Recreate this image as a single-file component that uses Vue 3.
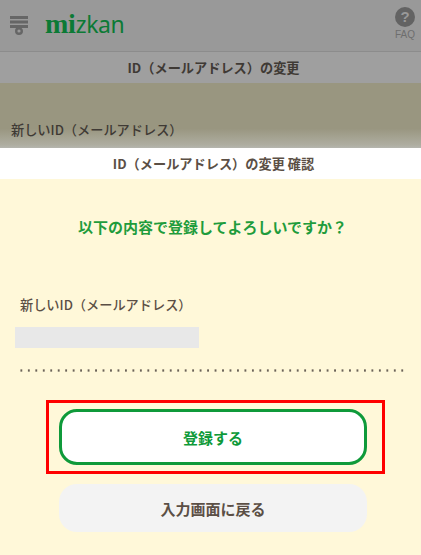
<script setup>
const title = 'ID（メールアドレス）の変更'
const label = '新しいID（メールアドレス）'
</script>

<template>
  <div class="page">
    <header class="top">
      <div class="brand">
        <svg class="menu" width="18" height="19" viewBox="0 0 18 19">
          <rect x="0" y="0" width="18" height="3" fill="#666" />
          <rect x="0" y="4.5" width="18" height="3" fill="#666" />
          <rect x="0" y="9" width="18" height="3" fill="#666" />
          <circle cx="9" cy="15" r="2.8" fill="none" stroke="#666" stroke-width="2.4" />
        </svg>
        <div class="logo"><span class="logo-a">mi</span><span class="logo-b">zkan</span></div>
      </div>
      <div class="faq">
        <div class="faq-icon">?</div>
        <div class="faq-text">FAQ</div>
      </div>
    </header>
    <div class="dim-title">{{ title }}</div>
    <div class="dim-body">{{ label }}</div>
    <div class="modal-title">{{ title }} 確認</div>
    <main class="modal">
      <h1 class="question">以下の内容で登録してよろしいですか？</h1>
      <div class="field-label">{{ label }}</div>
      <div class="field-value"></div>
      <div class="dots"></div>
      <div class="actions">
        <div class="mark">
          <button class="btn primary">登録する</button>
        </div>
        <button class="btn secondary">入力画面に戻る</button>
      </div>
    </main>
  </div>
</template>

<style>
html, body { margin: 0; padding: 0; }
</style>

<style scoped>
.page {
  width: 421px;
  height: 555px;
  overflow: hidden;
  display: flex;
  flex-direction: column;
  background: #fff8d9;
  color: #5b4f45;
  font-family: "Noto Sans CJK JP", "Noto Sans", sans-serif;
}
.top {
  height: 51px;
  flex: none;
  background: #999;
  border-bottom: 1px solid #8c8c8c;
  display: flex;
  justify-content: space-between;
  padding: 0 6px 0 10px;
}
.brand { display: flex; align-items: flex-start; }
.menu { margin-top: 16px; }
.logo {
  margin: 6px 0 0 17px;
  line-height: 36px;
  color: #0b7a35;
  white-space: nowrap;
}
.logo-a {
  font-family: "Liberation Serif", serif;
  font-weight: 700;
  font-size: 28px;
  letter-spacing: -0.2px;
}
.logo-b {
  font-family: "Noto Sans", sans-serif;
  font-size: 23px;
  letter-spacing: -0.4px;
}
.faq {
  display: flex;
  flex-direction: column;
  align-items: center;
  padding-top: 7px;
}
.faq-icon {
  width: 20px;
  height: 20px;
  border-radius: 50%;
  background: #636363;
  color: #999;
  font: 700 15px/20px "Liberation Sans", sans-serif;
  text-align: center;
}
.faq-text {
  margin-top: 2px;
  font: 10px/12px "Liberation Sans", sans-serif;
  color: #6e6e6e;
}
.dim-title {
  height: 31px;
  flex: none;
  box-sizing: border-box;
  padding-left: 6px;
  background: #9f9f9f;
  color: #3f3a35;
  font-size: 13.2px;
  font-weight: 700;
  line-height: 31px;
  text-align: center;
}
.dim-body {
  height: 65px;
  flex: none;
  box-sizing: border-box;
  padding: 37px 0 0 11px;
  background: linear-gradient(to bottom, #999680 0, #999680 70%, #aeada0 95%, #b5b5ae 100%);
  color: #3f3a35;
  font-size: 13.2px;
  font-weight: 500;
  line-height: 20px;
}
.modal-title {
  height: 31px;
  flex: none;
  box-sizing: border-box;
  padding-left: 6px;
  background: #fff;
  font-size: 13.2px;
  font-weight: 700;
  line-height: 31px;
  text-align: center;
}
.modal {
  flex: 1;
  display: flex;
  flex-direction: column;
}
.question {
  margin: 37px 0 0;
  padding-left: 4px;
  color: #1f9c3c;
  font-size: 15px;
  font-weight: 700;
  line-height: 22px;
  text-align: center;
}
.field-label {
  margin: 57px 0 0 20px;
  font-size: 13.2px;
  font-weight: 500;
  line-height: 20px;
}
.field-value {
  width: 184px;
  height: 21px;
  margin: 12px 0 0 15px;
  background: #e8e8e8;
}
.dots {
  height: 3px;
  margin: 21px 16px 0 20px;
  background-image: radial-gradient(circle, #6b6358 1px, transparent 1.3px);
  background-size: 7.47px 3px;
  background-position: -2.4px 0;
}
.actions {
  margin: 28px 0 0 46px;
  width: 339px;
  display: flex;
  flex-direction: column;
  align-items: flex-start;
}
.mark {
  box-sizing: border-box;
  width: 339px;
  height: 74px;
  border: 3px solid #f00;
  padding: 6px 10px;
}
.btn {
  display: block;
  box-sizing: border-box;
  width: 308px;
  border-radius: 18px;
  font-family: inherit;
  font-size: 15px;
  font-weight: 700;
  text-align: center;
  padding: 0;
}
.primary {
  height: 56px;
  background: #fff;
  border: 3px solid #0f9a3a;
  color: #0f9a3a;
}
.secondary {
  height: 48px;
  margin: 10px 0 0 13px;
  background: #f3f3f3;
  border: 0;
  color: #5b4f45;
}
</style>
